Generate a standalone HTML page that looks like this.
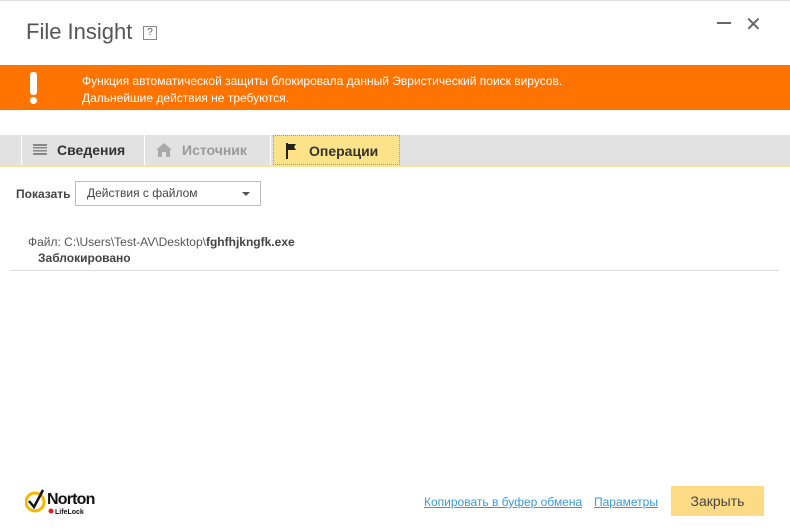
<!DOCTYPE html>
<html><head><meta charset="utf-8"><style>
*{margin:0;padding:0;box-sizing:border-box}
body{width:790px;height:528px;background:#fff;font-family:"Segoe UI","Liberation Sans","DejaVu Sans",sans-serif;position:relative;overflow:hidden;color:#333}
.topline{position:absolute;left:0;top:0;width:790px;height:1px;background:#ddd}
.title{position:absolute;left:26px;top:19px;font-size:22px;color:#555;font-weight:300}
.help{position:absolute;left:143px;top:26px;width:14px;height:14px;border:1px solid #888;font-size:10px;line-height:12px;text-align:center;color:#555}
.min{position:absolute;left:717px;top:22px;width:14px;height:2px;background:#666}
.x{position:absolute;left:745px;top:12px;font-size:20px;color:#666}
.banner{position:absolute;left:0;top:65px;width:790px;height:45px;background:#ff7300;color:#fff}
.excl{position:absolute;left:30px;top:7px;width:7px;height:23px;background:#fff;border-radius:3px}
.dot{position:absolute;left:30px;top:32px;width:7px;height:7px;background:#fff;border-radius:50%}
.btext{position:absolute;left:82px;top:8px;font-size:12px;line-height:17px}
.tabs{position:absolute;left:0;top:135px;width:790px;height:30px;background:#e2e2e2;border-bottom:2px solid #f3e5a2;box-sizing:content-box}
.tab{position:absolute;top:0;height:30px;font-size:14px;font-weight:bold;line-height:30px}
.t1{left:21px;width:124px;background:#e2e2e2;border-left:1px solid #fff;border-right:1px solid #fff}
.t2{left:146px;width:125px;color:#9a9a9a;border-right:1px solid #fff}
.t3{left:273px;width:127px;background:#fce38a;border:1px dotted #999}
.show{position:absolute;left:16px;top:187px;font-size:12px;font-weight:bold;color:#444}
.sel{position:absolute;left:75px;top:181px;width:186px;height:25px;border:1px solid #bbb;font-size:12px;line-height:23px;padding-left:11px;color:#444}
.sel:after{content:"";position:absolute;right:10px;top:10px;border:4px solid transparent;border-top:4px solid #555}
.file{position:absolute;left:28px;top:235px;font-size:12px;color:#555}
.blk{position:absolute;left:38px;top:251px;font-size:12px;font-weight:bold;color:#444}
.hr{position:absolute;left:10px;top:270px;width:769px;height:1px;background:#ddd}
.link{position:absolute;top:495px;font-size:12px;color:#3a9ad9;text-decoration:underline}
.close{position:absolute;left:671px;top:486px;width:93px;height:30px;background:#fddb86;font-size:14px;line-height:30px;text-align:center;color:#444}
.logo{position:absolute;left:25px;top:488px}
</style></head><body>
<div class="topline"></div>
<div class="title">File Insight</div>
<div class="help">?</div>
<div class="min"></div>
<div class="x">✕</div>
<div class="banner"><div class="excl"></div><div class="dot"></div>
<div class="btext">Функция автоматической защиты блокировала данный Эвристический поиск вирусов.<br>Дальнейшие действия не требуются.</div></div>
<div class="tabs">
<div class="tab t1"><svg style="position:absolute;left:11px;top:9px" width="14" height="12"><g fill="#888"><rect y="0" width="14" height="2"/><rect y="3" width="14" height="1.5"/><rect y="6" width="14" height="1.5"/><rect y="9" width="14" height="2"/></g></svg><span style="position:absolute;left:35px">Сведения</span></div>
<div class="tab t2"><svg style="position:absolute;left:10px;top:8px" width="16" height="14"><path d="M8 0L0 7h2v7h4V9h4v5h4V7h2z" fill="#aaa"/></svg><span style="position:absolute;left:36px">Источник</span></div>
<div class="tab t3"><svg style="position:absolute;left:11px;top:7px" width="12" height="16"><rect x="1" y="0" width="2" height="16" fill="#222"/><path d="M3 1h8l-2 3 2 3H3z" fill="#222"/></svg><span style="position:absolute;left:35px">Операции</span></div>
</div>
<div class="show">Показать</div>
<div class="sel">Действия с файлом</div>
<div class="file">Файл: C:\Users\Test-AV\Desktop\<b style="color:#444">fghfhjkngfk.exe</b></div>
<div class="blk">Заблокировано</div>
<div class="hr"></div>
<div class="logo"><svg width="80" height="30"><circle cx="10" cy="14" r="9" fill="none" stroke="#f5b800" stroke-width="3"/><path d="M4 13l5 6 9-17" fill="none" stroke="#111" stroke-width="2.5"/><text x="22" y="16" font-family="Liberation Sans" font-weight="bold" font-size="16" fill="#111" letter-spacing="-0.8">Norton</text><circle cx="26" cy="23" r="2.5" fill="#e2231a"/><text x="30" y="26" font-family="Liberation Sans" font-size="7" font-weight="bold" fill="#111">LifeLock</text></svg></div>
<div class="link" style="left:424px">Копировать в буфер обмена</div>
<div class="link" style="left:594px">Параметры</div>
<div class="close">Закрыть</div>
</body></html>
